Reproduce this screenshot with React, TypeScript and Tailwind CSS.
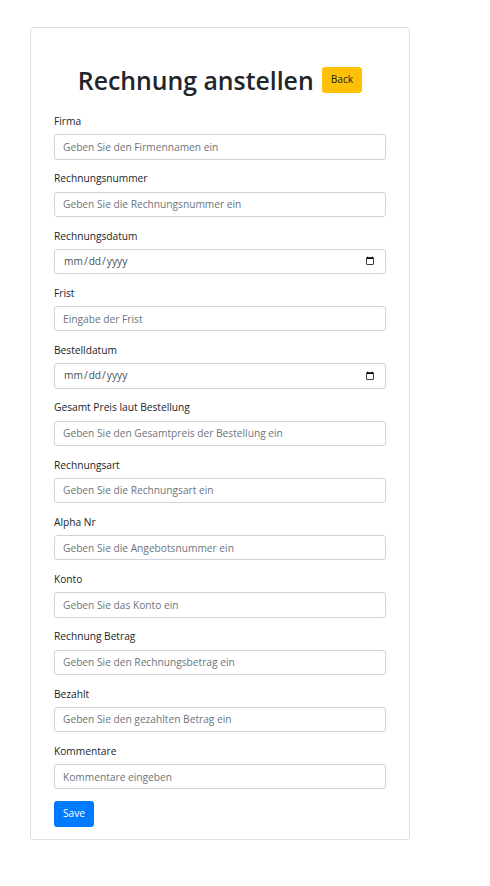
import React from "react"

const fields: { label: string; placeholder?: string; type?: string }[] = [
  { label: "Firma", placeholder: "Geben Sie den Firmennamen ein" },
  { label: "Rechnungsnummer", placeholder: "Geben Sie die Rechnungsnummer ein" },
  { label: "Rechnungsdatum", type: "date" },
  { label: "Frist", placeholder: "Eingabe der Frist" },
  { label: "Bestelldatum", type: "date" },
  { label: "Gesamt Preis laut Bestellung", placeholder: "Geben Sie den Gesamtpreis der Bestellung ein" },
  { label: "Rechnungsart", placeholder: "Geben Sie die Rechnungsart ein" },
  { label: "Alpha Nr", placeholder: "Geben Sie die Angebotsnummer ein" },
  { label: "Konto", placeholder: "Geben Sie das Konto ein" },
  { label: "Rechnung Betrag", placeholder: "Geben Sie den Rechnungsbetrag ein" },
  { label: "Bezahlt", placeholder: "Geben Sie den gezahlten Betrag ein" },
  { label: "Kommentare", placeholder: "Kommentare eingeben" },
]

export default function App() {
  return (
    <div className="min-h-[886px] w-[490px] bg-white pt-[27px] pl-[30px] font-['Segoe_UI','Open_Sans',sans-serif] text-[#212529]">
      <div className="w-[380px] rounded-[3px] border border-[#dfdfdf] px-[23px] pt-[36px] pb-[12px]">
        <div className="mb-[17px] flex items-center justify-center gap-[8px]">
          <h1 className="text-[24.8px] font-semibold leading-[32px]">Rechnung anstellen</h1>
          <button className="h-[26px] rounded-[3px] bg-[#ffc107] px-[9px] text-[10.2px] text-[#212529]">Back</button>
        </div>

        <form onSubmit={(e) => e.preventDefault()}>
          {fields.map((f, i) => (
            <div key={f.label} className={i === fields.length - 1 ? "mb-[9.5px]" : "mb-[10.6px]"}>
              <label className="mb-[5.33px] block text-[10.2px] leading-[16px]">{f.label}</label>
              <input
                type={f.type ?? "text"}
                placeholder={f.placeholder}
                className="block h-[25.33px] w-full rounded-[3px] border border-[#ced4da] px-[8px] text-[10.2px] text-[#495057] placeholder:text-[#6c757d] outline-none"
              />
            </div>
          ))}
          <button className="h-[26px] rounded-[3px] bg-[#007bff] px-[9px] text-[10.2px] text-white">Save</button>
        </form>
      </div>
    </div>
  )
}
